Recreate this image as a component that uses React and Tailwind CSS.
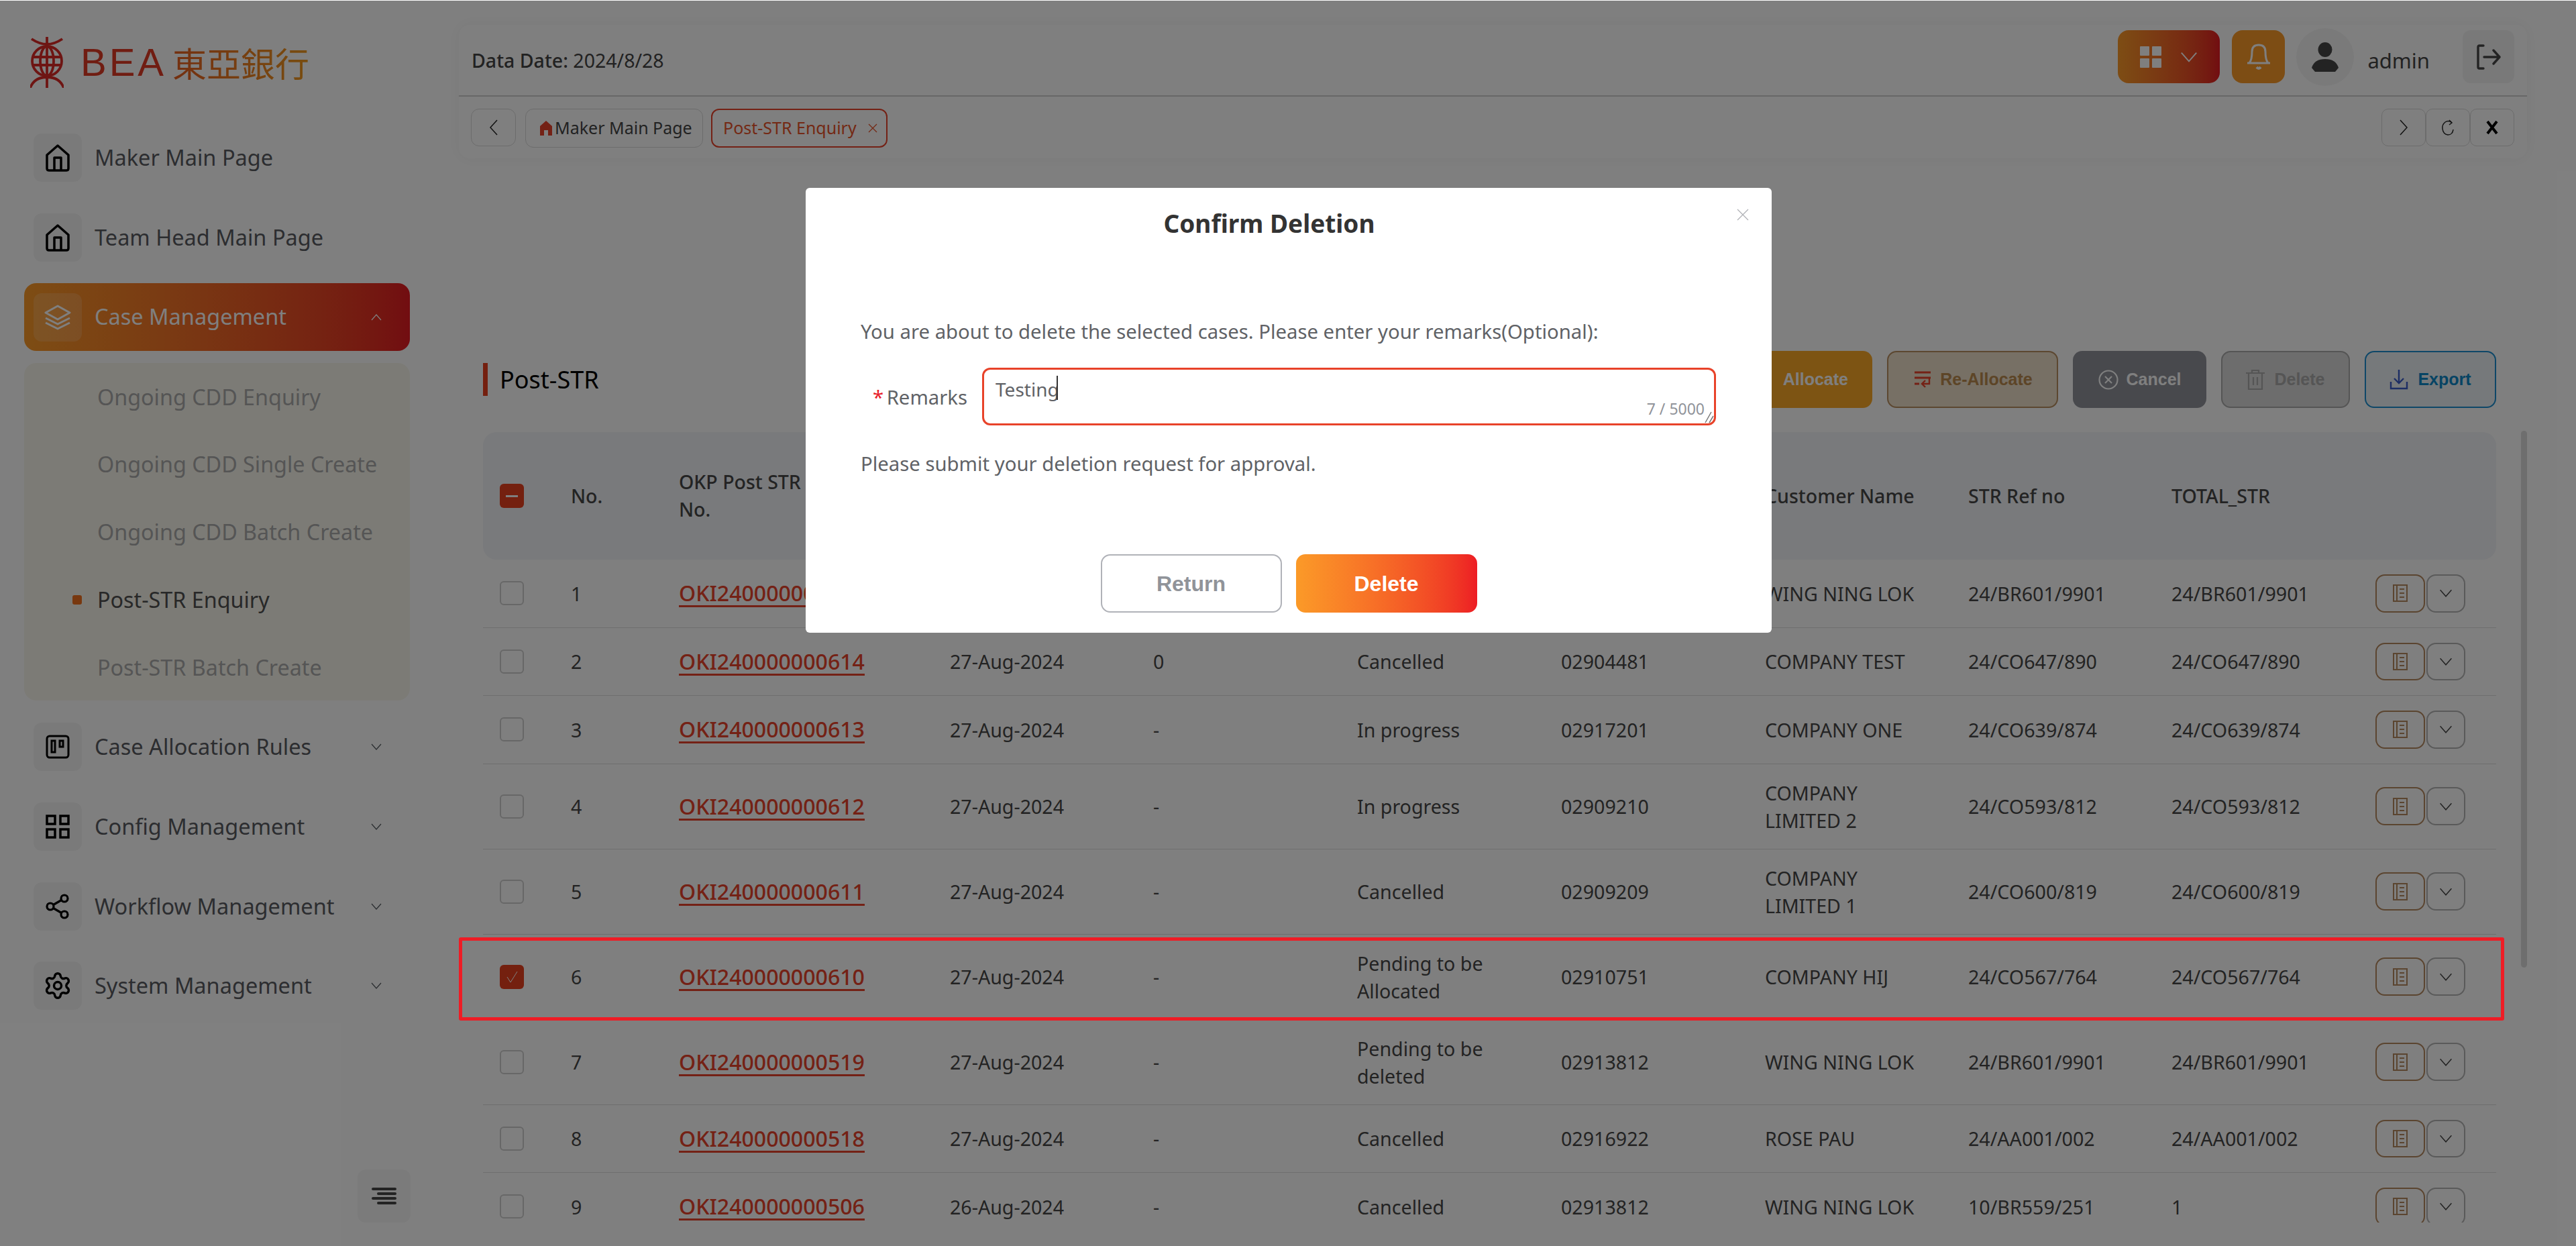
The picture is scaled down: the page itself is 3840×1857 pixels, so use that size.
import React from "react";
import { Settings } from "lucide-react";

const rows = [
  { id: "OKI240000000615", name: "WING NING LOK", ref: "24/BR601/9901", total: "24/BR601/9901" },
  { id: "OKI240000000614", date: "27-Aug-2024", count: "0", status: "Cancelled", cust: "02904481", name: "COMPANY TEST", ref: "24/CO647/890", total: "24/CO647/890" },
  { id: "OKI240000000613", date: "27-Aug-2024", count: "-", status: "In progress", cust: "02917201", name: "COMPANY ONE", ref: "24/CO639/874", total: "24/CO639/874" },
  { id: "OKI240000000612", date: "27-Aug-2024", count: "-", status: "In progress", cust: "02909210", name: "COMPANY LIMITED 2", ref: "24/CO593/812", total: "24/CO593/812" },
  { id: "OKI240000000611", date: "27-Aug-2024", count: "-", status: "Cancelled", cust: "02909209", name: "COMPANY LIMITED 1", ref: "24/CO600/819", total: "24/CO600/819" },
  { id: "OKI240000000610", date: "27-Aug-2024", count: "-", status: "Pending to be Allocated", cust: "02910751", name: "COMPANY HIJ", ref: "24/CO567/764", total: "24/CO567/764", checked: true },
  { id: "OKI240000000519", date: "27-Aug-2024", count: "-", status: "Pending to be deleted", cust: "02913812", name: "WING NING LOK", ref: "24/BR601/9901", total: "24/BR601/9901" },
  { id: "OKI240000000518", date: "27-Aug-2024", count: "-", status: "Cancelled", cust: "02916922", name: "ROSE PAU", ref: "24/AA001/002", total: "24/AA001/002" },
  { id: "OKI240000000506", date: "26-Aug-2024", count: "-", status: "Cancelled", cust: "02913812", name: "WING NING LOK", ref: "10/BR559/251", total: "1" },
];

const Chevron = ({ up, className = "w-4 h-3", color = "#555a60" }) => (
  <svg viewBox="0 0 16 10" className={className} fill="none" stroke={color} strokeWidth="1.2">
    <path d={up ? "M1 9 L8 1 L15 9" : "M1 1 L8 9 L15 1"} />
  </svg>
);

const HomeIcon = () => (
  <svg viewBox="0 0 36 41" className="w-[36px] h-[41px]" fill="none" stroke="#000" strokeWidth="3.5" strokeLinejoin="round">
    <path d="M18 2 L34 16 V36 Q34 39 31 39 H5 Q2 39 2 36 V16 Z" />
    <path d="M13 39 V20 H23 V39" />
  </svg>
);

const LayersIcon = () => (
  <svg viewBox="0 0 40 40" className="w-[40px] h-[40px]" fill="none" stroke="#fff" strokeWidth="3" strokeLinejoin="round">
    <path d="M20 3 L38 13 L20 23 L2 13 Z" />
    <path d="M2 21 L20 30 L38 21" />
    <path d="M2 28 L20 37 L38 28" />
  </svg>
);

const KanbanIcon = () => (
  <svg viewBox="0 0 36 36" className="w-[36px] h-[36px]" fill="none" stroke="#000" strokeWidth="3">
    <rect x="2" y="2" width="32" height="32" rx="4" />
    <rect x="9" y="9" width="5" height="17" />
    <rect x="21" y="9" width="5" height="9" />
  </svg>
);

const GridIcon = () => (
  <svg viewBox="0 0 36 36" className="w-[36px] h-[36px]" fill="none" stroke="#000" strokeWidth="3.5">
    <rect x="2" y="2" width="12" height="12" />
    <rect x="22" y="2" width="12" height="12" />
    <rect x="2" y="22" width="12" height="12" />
    <rect x="22" y="22" width="12" height="12" />
  </svg>
);

const ShareIcon = () => (
  <svg viewBox="0 0 36 38" className="w-[36px] h-[38px]" fill="none" stroke="#000" strokeWidth="3.2">
    <circle cx="28" cy="7" r="5" />
    <circle cx="7" cy="19" r="5" />
    <circle cx="28" cy="31" r="5" />
    <path d="M11.5 16.5 L23.5 9.5 M11.5 21.5 L23.5 28.5" />
  </svg>
);

const BookIcon = () => (
  <svg viewBox="0 0 22 26" className="w-[22px] h-[26px]" fill="none" stroke="#b68a60" strokeWidth="2">
    <rect x="1" y="1" width="20" height="24" />
    <path d="M6 1 V25 M10 7 H17 M10 13 H17 M10 19 H17" />
  </svg>
);

const Logo = () => (
  <div className="flex items-center ml-[45px] mt-[55px] h-[76px]">
    <svg viewBox="0 0 50 76" className="w-[50px] h-[76px]" fill="none" stroke="#dc2a26" strokeWidth="3.8">
      <path d="M25 0 V76 M2 3 Q14 11 25 11 Q36 11 48 3 M0 76 Q6 60 25 60 Q44 60 50 76" />
      <circle cx="25" cy="36" r="22" />
      <ellipse cx="25" cy="36" rx="10" ry="22" />
      <path d="M3 30 H47 M3 42 H47" />
    </svg>
    <span className="ml-[25px] font-['Liberation_Sans'] text-[58px] leading-none tracking-[4px] text-[#e03a25]">BEA</span>
    <span className="ml-[9px] font-['Noto_Sans_CJK_TC',sans-serif] text-[51px] leading-none bg-linear-to-r from-[#e85f20] to-[#f09a20] bg-clip-text text-transparent">東亞銀行</span>
  </div>
);

const NavItem = ({ icon, label, chevron, className = "" }) => (
  <div className={`flex items-center h-[72px] pl-[14px] pr-[42px] ${className}`}>
    <div className="w-[72px] h-[72px] rounded-[12px] bg-[#f5f5f5] flex items-center justify-center">{icon}</div>
    <span className="ml-[19px] flex-1 text-[32.5px] text-[#585a60] whitespace-nowrap">{label}</span>
    {chevron && <Chevron />}
  </div>
);

const Sidebar = () => (
  <aside className="w-[660px] shrink-0 flex flex-col">
    <Logo />
    <nav className="mt-[68px] ml-[36px] w-[575px] flex flex-col">
      <NavItem icon={<HomeIcon />} label="Maker Main Page" />
      <NavItem icon={<HomeIcon />} label="Team Head Main Page" className="mt-[47px]" />
      <div className="mt-[32px] h-[101px] rounded-[18px] bg-linear-to-r from-[#fb9a28] to-[#e41a22] flex items-center pl-[14px] pr-[42px]">
        <div className="w-[72px] h-[72px] rounded-[12px] bg-white/15 flex items-center justify-center"><LayersIcon /></div>
        <span className="ml-[19px] flex-1 text-[32.5px] text-white">Case Management</span>
        <Chevron up color="#fff" />
      </div>
      <div className="mt-[18px] h-[503px] rounded-[18px] bg-[#f9f7ed] flex flex-col pl-[109px] text-[32.3px] text-[#aaaaaa]">
        <div className="h-[100px] flex items-center">Ongoing CDD Enquiry</div>
        <div className="h-[101px] flex items-center">Ongoing CDD Single Create</div>
        <div className="h-[101px] flex items-center">Ongoing CDD Batch Create</div>
        <div className="h-[101px] flex items-center relative text-[#505050]">
          <span className="absolute -left-[37px] w-[14px] h-[14px] rounded-[3px] bg-[#f0701e]" />
          Post-STR Enquiry
        </div>
        <div className="h-[100px] flex items-center">Post-STR Batch Create</div>
      </div>
      <NavItem icon={<KanbanIcon />} label="Case Allocation Rules" chevron className="mt-[33px]" />
      <NavItem icon={<GridIcon />} label="Config Management" chevron className="mt-[47px]" />
      <NavItem icon={<ShareIcon />} label="Workflow Management" chevron className="mt-[47px]" />
      <NavItem icon={<Settings size={44} color="#000" strokeWidth={1.9} />} label="System Management" chevron className="mt-[46px]" />
    </nav>
    <div className="mt-auto mb-[35px] mr-[48px] self-end w-[79px] h-[79px] rounded-[12px] bg-[#f7f7f7] flex flex-col items-end justify-center gap-[3px] pr-[21px]">
      <span className="block w-[37px] h-[4px] rounded-full bg-[#464646]" />
      <span className="block w-[29px] h-[4px] rounded-full bg-[#464646]" />
      <span className="block w-[37px] h-[4px] rounded-full bg-[#464646]" />
      <span className="block w-[29px] h-[4px] rounded-full bg-[#464646]" />
    </div>
  </aside>
);

const TopCard = () => (
  <div className="ml-[24px] mr-[73px] mt-[37px] h-[199px] rounded-[16px] bg-white shadow-[0_0_24px_rgba(0,0,0,0.05)] flex flex-col">
    <div className="h-[107px] border-b-2 border-[#cfcfcf] flex items-center pl-[19px] pr-[19px] pb-[10px]">
      <div className="flex-1 mt-[12px] text-[28.5px] text-[#444]"><span className="font-medium">Data Date:</span> 2024/8/28</div>
      <div className="w-[152px] h-[79px] rounded-[16px] bg-linear-to-r from-[#fb9a28] to-[#e41a22] flex items-center justify-center gap-[28px]">
        <svg viewBox="0 0 32 32" className="w-[32px] h-[32px]" fill="#fff">
          <rect x="0" y="0" width="14" height="14" rx="1" />
          <rect x="18" y="0" width="14" height="14" rx="1" />
          <rect x="0" y="18" width="14" height="14" rx="1" />
          <rect x="18" y="18" width="14" height="14" rx="1" />
        </svg>
        <Chevron color="#fff" className="w-[26px] h-[16px]" />
      </div>
      <div className="ml-[18px] w-[79px] h-[79px] rounded-[16px] bg-[#fb9a28] flex items-center justify-center">
        <svg viewBox="0 0 36 40" className="w-[36px] h-[40px]" fill="none" stroke="#fff" strokeWidth="3">
          <path d="M1 29 H35 M4 29 Q8 24 8 12 Q8 2 18 2 Q28 2 28 12 Q28 24 32 29" />
          <path d="M15 35 Q18 39 21 35" strokeWidth="4" />
        </svg>
      </div>
      <div className="ml-[17px] w-[86px] h-[86px] rounded-full bg-[#f5f5f5] flex items-center justify-center">
        <svg viewBox="0 0 40 44" className="w-[40px] h-[44px]" fill="#464646">
          <ellipse cx="20" cy="11" rx="10.5" ry="11" />
          <path d="M0 38 Q4 25 20 25 Q36 25 40 38 L35 44 H5 Z" />
        </svg>
      </div>
      <span className="ml-[20px] mt-[12px] text-[31px] text-[#444]">admin</span>
      <div className="ml-[49px] w-[77px] h-[79px] rounded-[12px] bg-[#f3f3f3] flex items-center justify-center">
        <svg viewBox="0 0 36 38" className="w-[36px] h-[38px]" fill="none" stroke="#464646" strokeWidth="3.4" strokeLinecap="round" strokeLinejoin="round">
          <path d="M10 2 H4 Q2 2 2 4 V34 Q2 36 4 36 H10" />
          <path d="M11 19 H34 M25 9 L34 19 L25 29" />
        </svg>
      </div>
    </div>
    <div className="flex-1 flex items-start pt-[18px] pl-[18px] pr-[19px] text-[25px] whitespace-nowrap">
      <div className="w-[67px] h-[56px] rounded-[12px] border border-[#d8d8d8] flex items-center justify-center">
        <svg viewBox="0 0 12 24" className="w-[12px] h-[24px]" fill="none" stroke="#222" strokeWidth="1.5"><path d="M11 1 L1 12 L11 23" /></svg>
      </div>
      <div className="ml-[14px] w-[265px] h-[58px] rounded-[12px] border border-[#d8d8d8] flex items-center pl-[21px] text-[#444]">
        <svg viewBox="0 0 18 22" className="w-[18px] h-[22px] mr-[4px]" fill="#e8432a"><path d="M9 0 L18 8 V22 H12 V14 H6 V22 H0 V8 Z" /></svg>
        Maker Main Page
      </div>
      <div className="ml-[12px] w-[263px] h-[58px] rounded-[12px] border-2 border-[#e8432a] flex items-center pl-[16px] text-[#e8532a]">
        Post-STR Enquiry
        <svg viewBox="0 0 14 14" className="w-[14px] h-[14px] ml-[17px]" fill="none" stroke="#e8532a" strokeWidth="1.3"><path d="M1 1 L13 13 M13 1 L1 13" /></svg>
      </div>
      <div className="ml-auto flex">
        <div className="w-[66px] h-[56px] rounded-[10px] border border-[#d8d8d8] flex items-center justify-center">
          <svg viewBox="0 0 12 24" className="w-[12px] h-[24px]" fill="none" stroke="#222" strokeWidth="1.5"><path d="M1 1 L11 12 L1 23" /></svg>
        </div>
        <div className="w-[66px] h-[56px] rounded-[10px] border border-[#d8d8d8] flex items-center justify-center">
          <svg viewBox="0 0 20 24" className="w-[20px] h-[24px]" fill="none" stroke="#222" strokeWidth="1.5">
            <path d="M15 4 Q10 1 6 4 Q1 8 2 14 Q3 22 10 23 Q17 23 18 15" />
            <path d="M12 1 L16 5 L12 8" />
          </svg>
        </div>
        <div className="w-[66px] h-[56px] rounded-[10px] border border-[#d8d8d8] flex items-center justify-center">
          <svg viewBox="0 0 18 22" className="w-[18px] h-[22px]" fill="none" stroke="#000" strokeWidth="4"><path d="M2 2 L16 20 M16 2 L2 20" /></svg>
        </div>
      </div>
    </div>
  </div>
);

const ActionButtons = () => (
  <div className="flex gap-[22px] font-['Liberation_Sans'] font-bold text-[25px]">
    <div className="w-[180px] h-[85px] rounded-[14px] bg-[#fba826] text-white flex items-center justify-end pr-[36px]">Allocate</div>
    <div className="w-[255px] h-[85px] rounded-[14px] border-2 border-[#b88e60] bg-[#eee0ca] text-[#ba8a4e] flex items-center justify-center gap-[14px] pl-[3px]">
      <svg viewBox="0 0 24 28" className="w-[24px] h-[28px]" fill="none" stroke="#e8432a" strokeWidth="3">
        <path d="M0 3 H24 M0 11 H24 M0 20 H7" />
        <path d="M22 11 V20 H12 M16 15 L11 20 L16 25" strokeWidth="2.4" />
      </svg>
      Re-Allocate
    </div>
    <div className="w-[199px] h-[85px] rounded-[14px] bg-[#90929a] text-white flex items-center justify-center gap-[12px]">
      <svg viewBox="0 0 30 30" className="w-[30px] h-[30px]" fill="none" stroke="#fff" strokeWidth="2.2">
        <circle cx="15" cy="15" r="13.5" />
        <path d="M10 10 L20 20 M20 10 L10 20" />
      </svg>
      Cancel
    </div>
    <div className="w-[192px] h-[85px] rounded-[14px] border-2 border-[#aaaaaa] bg-[#dadada] text-[#aaaaaa] flex items-center justify-center gap-[14px]">
      <svg viewBox="0 0 28 30" className="w-[28px] h-[30px]" fill="none" stroke="#aaaaaa" strokeWidth="2.2">
        <path d="M0 5 H28 M9 5 V1 H19 V5 M4 5 V29 H24 V5 M11 11 V23 M17 11 V23" />
      </svg>
      Delete
    </div>
    <div className="w-[196px] h-[85px] rounded-[14px] border-2 border-[#1c8fd0] bg-[#ecf2f6] text-[#0d88c8] flex items-center justify-center gap-[14px]">
      <svg viewBox="0 0 28 30" className="w-[28px] h-[30px]" fill="none" stroke="#3a5cc8" strokeWidth="2.4">
        <path d="M14 0 V20 M7 13 L14 20 L21 13" />
        <path d="M2 18 V28 H26 V18" />
      </svg>
      Export
    </div>
  </div>
);

const RowCheckbox = ({ checked }) =>
  checked ? (
    <span className="block w-[36px] h-[36px] rounded-[6px] bg-[#e8401e] flex items-center justify-center">
      <svg viewBox="0 0 20 20" className="w-[20px] h-[20px]" fill="none" stroke="#fff" strokeWidth="1"><path d="M3 10 L8 18 L18 2" /></svg>
    </span>
  ) : (
    <span className="block w-[36px] h-[36px] rounded-[6px] border-2 border-[#cfcfcf] bg-white" />
  );

const Table = () => (
  <table className="table-fixed w-[3001px] border-separate border-spacing-0 text-left text-[#464646]">
    <colgroup>
      <col className="w-[131px]" />
      <col className="w-[161px]" />
      <col className="w-[404px]" />
      <col className="w-[303px]" />
      <col className="w-[304px]" />
      <col className="w-[304px]" />
      <col className="w-[304px]" />
      <col className="w-[303px]" />
      <col className="w-[303px]" />
      <col className="w-[304px]" />
      <col className="w-[180px]" />
    </colgroup>
    <thead>
      <tr className="h-[190px] bg-[#f2f4f8] text-[28.5px] leading-[41px] font-medium">
        <th className="pl-[25px] rounded-l-[20px] font-medium">
          <span className="block w-[36px] h-[36px] rounded-[6px] bg-[#e8401e] flex items-center justify-center">
            <span className="block w-[18px] h-[3px] bg-white" />
          </span>
        </th>
        <th className="font-medium">No.</th>
        <th className="font-medium pr-[180px]">OKP Post STR No.</th>
        <th /><th /><th /><th />
        <th className="font-medium">Customer Name</th>
        <th className="font-medium">STR Ref no</th>
        <th className="font-medium">TOTAL_STR</th>
        <th className="rounded-r-[20px]" />
      </tr>
    </thead>
    <tbody className="text-[28.6px] leading-[41px]">
      {rows.map((row, i) => {
        const line = i < rows.length - 1 ? "border-b border-[#dcdcdc]" : "";
        const cell = `py-[22px] pr-[60px] ${line}`;
        return (
          <tr key={row.id}>
            <td className={`pl-[25px] ${cell}`}><RowCheckbox checked={row.checked} /></td>
            <td className={cell}>{i + 1}</td>
            <td className={cell}>
              <a className="text-[32.1px] font-medium text-[#e8432a] underline decoration-[3px] underline-offset-[6px] whitespace-nowrap">{row.id}</a>
            </td>
            <td className={cell}>{row.date}</td>
            <td className={cell}>{row.count}</td>
            <td className={cell}>{row.status}</td>
            <td className={cell}>{row.cust}</td>
            <td className={cell}>{row.name}</td>
            <td className={cell}>{row.ref}</td>
            <td className={cell}>{row.total}</td>
            <td className={`py-[22px] ${line}`}>
              <div className="flex gap-[2px] h-[56.5px]">
                <div className="w-[74px] rounded-[14px] border-2 border-[#b68a60] flex items-center justify-center"><BookIcon /></div>
                <div className="w-[58px] rounded-[14px] border-2 border-[#b4b4b4] flex items-center justify-center"><Chevron color="#444" className="w-[20px] h-[12px]" /></div>
              </div>
            </td>
          </tr>
        );
      })}
    </tbody>
  </table>
);

const Modal = () => (
  <div className="absolute left-[1201px] top-[280px] w-[1440px] h-[663px] rounded-[6px] bg-white flex flex-col px-[82px]">
    <svg viewBox="0 0 18 18" className="absolute right-[34px] top-[31px] w-[18px] h-[18px]" fill="none" stroke="#aeb0b5" strokeWidth="1.2"><path d="M1 1 L17 17 M17 1 L1 17" /></svg>
    <h2 className="mt-[30px] mr-[58px] text-center text-[37px] leading-[46px] font-bold text-[#333]">Confirm Deletion</h2>
    <p className="mt-[115px] text-[29.3px] leading-[46px] text-[#606266] whitespace-nowrap">You are about to delete the selected cases. Please enter your remarks(Optional):</p>
    <div className="mt-[31px] flex">
      <label className="w-[181px] shrink-0 pr-[22px] pt-[22px] text-right text-[29.3px] leading-[44px] text-[#606266] whitespace-nowrap"><span className="text-[#e8202a] mr-[-3px]">*</span> Remarks</label>
      <div className="relative w-[1094px] h-[86px]">
        <textarea
          readOnly
          defaultValue="Testing"
          className="block w-full h-full resize-none rounded-[12px] border-[3px] border-[#e8432a] px-[17px] py-[9px] text-[28px] leading-[40px] text-[#606266] outline-none"
        />
        <span className="absolute left-[111px] top-[12px] w-[2px] h-[36px] bg-[#333]" />
        <span className="absolute right-[17px] bottom-[10px] text-[23px] leading-[30px] text-[#909399]">7 / 5000</span>
        <svg viewBox="0 0 14 18" className="absolute right-[3px] bottom-[3px] w-[14px] h-[18px]" fill="none" stroke="#777" strokeWidth="1.5"><path d="M1 17 L10 1 M7 17 L13 7" /></svg>
      </div>
    </div>
    <p className="mt-[34px] text-[29.3px] leading-[46px] text-[#606266]">Please submit your deletion request for approval.</p>
    <div className="mt-auto mb-[30px] flex justify-center gap-[21px] font-['Liberation_Sans'] font-bold text-[32px]">
      <div className="w-[270px] h-[87px] rounded-[14px] border-2 border-[#b0b2b8] bg-white text-[#909399] flex items-center justify-center">Return</div>
      <div className="w-[270px] h-[87px] rounded-[14px] bg-linear-to-r from-[#fb9a28] to-[#ed1c24] text-white flex items-center justify-center">Delete</div>
    </div>
  </div>
);

export default function App() {
  return (
    <div className="relative w-[3840px] h-[1857px] overflow-hidden bg-white font-['Noto_Sans',sans-serif] flex">
      <Sidebar />
      <main className="flex-1 min-w-0 flex flex-col">
        <TopCard />
        {/* page title and toolbar */}
        <div className="mt-[287px] ml-[60px] mr-[119px] h-[85px] flex items-center justify-between">
          <div className="flex items-center h-[49px] border-l-[7px] border-[#e8401e] pl-[18px] text-[36px] text-black">Post-STR</div>
          <ActionButtons />
        </div>
        {/* table with its scrollbar */}
        <div className="mt-[34px] ml-[60px] h-[1180px] overflow-hidden flex items-start">
          <div className="mt-[2px]"><Table /></div>
          <div className="ml-[37px] w-[9px] h-[800px] rounded-full bg-[#dcdcdc]" />
        </div>
      </main>
      {/* dimmed backdrop */}
      <div className="absolute inset-x-0 top-px bottom-0 bg-black/50" />
      {/* row highlight sits above the backdrop */}
      <div className="absolute left-[684px] top-[1397px] w-[3049px] h-[124px] rounded-[3px] border-[5px] border-[#ee1c25]" />
      <Modal />
    </div>
  );
}
